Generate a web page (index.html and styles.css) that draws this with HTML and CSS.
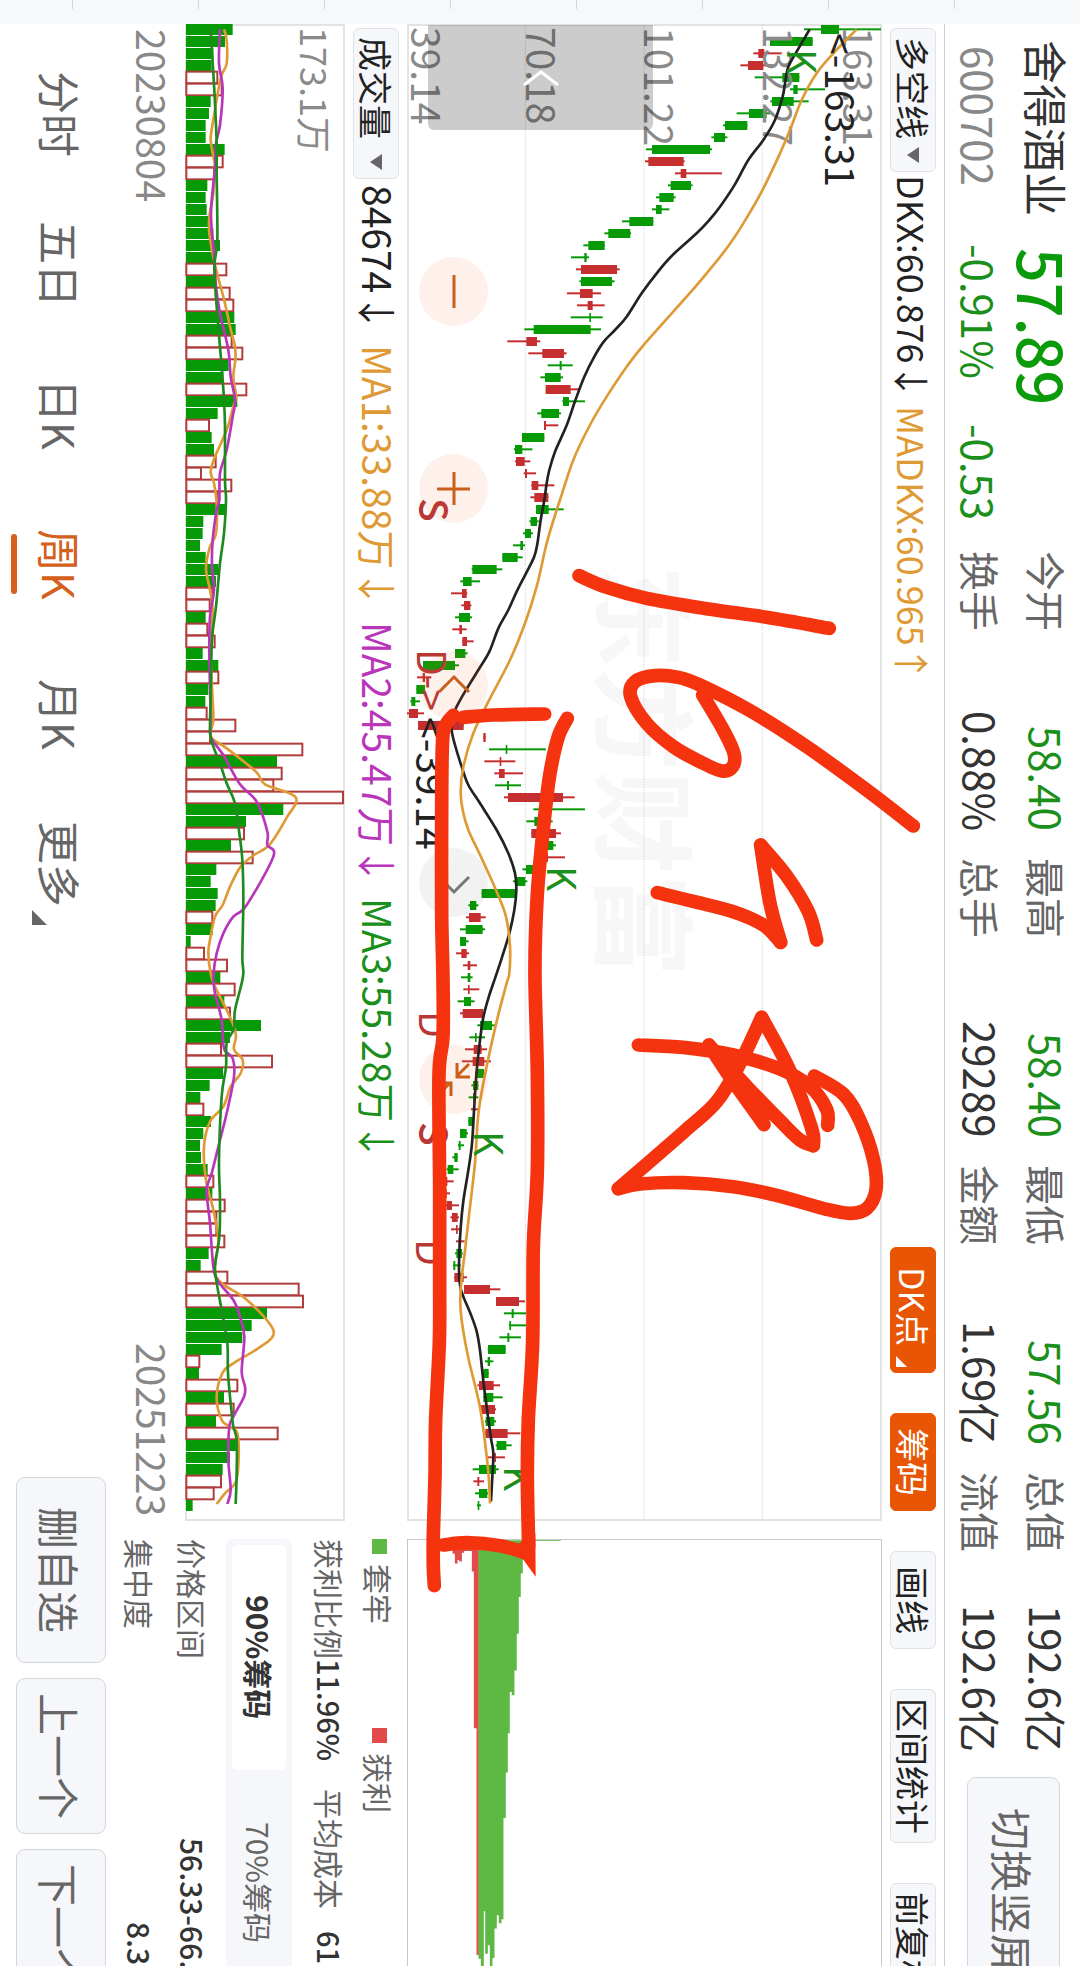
FILE: index.html
```html
<!DOCTYPE html>
<html lang="zh-CN">

<head>
  <meta charset="UTF-8" />
  <meta name="viewport" content="width=device-width, initial-scale=1" />
  <title>舍得酒业 600702</title>
  <link rel="stylesheet" href="styles.css">
</head>

<body>
  <div class="ruler"></div>
  <main class="screen">
    <header class="quote">
      <div class="stock">
        <div class="stockRow">
          <h1 class="stockName">舍得酒业</h1>
          <span class="stockPrice">57.89</span>
        </div>
        <div class="stockRow">
          <span class="stockCode">600702</span>
          <span class="stockPercent">-0.91%</span>
          <span class="stockChange">-0.53</span>
        </div>
      </div>
      <dl class="stats">
        <div class="stat"><dt>今开</dt><dd class="down">58.40</dd></div>
        <div class="stat"><dt>最高</dt><dd class="down">58.40</dd></div>
        <div class="stat"><dt>最低</dt><dd class="down">57.56</dd></div>
        <div class="stat"><dt>总值</dt><dd>192.6亿</dd></div>
        <div class="stat"><dt>换手</dt><dd>0.88%</dd></div>
        <div class="stat"><dt>总手</dt><dd>29289</dd></div>
        <div class="stat"><dt>金额</dt><dd>1.69亿</dd></div>
        <div class="stat"><dt>流值</dt><dd>192.6亿</dd></div>
      </dl>
      <button class="rotateButton" type="button">切换竖屏</button>
    </header>

    <div class="toolbar">
      <button class="tool picker" type="button">多空线<span class="caret"></span></button>
      <span class="legend dkx">DKX:60.876↓</span>
      <span class="legend madkx">MADKX:60.965↑</span>
      <div class="tools">
        <button class="tool active corner" type="button">DK点</button>
        <button class="tool active" type="button">筹码</button>
        <button class="tool" type="button">画线</button>
        <button class="tool" type="button">区间统计</button>
        <button class="tool" type="button">前复权</button>
      </div>
    </div>

    <div class="board">
      <div class="charts">
        <div class="priceChart">
          <svg class="plot" viewBox="0 0 475 1497">
            <text class="watermark" transform="translate(197 541) rotate(90)">东方财富</text>
            <g id="grid" transform="scale(.33333) translate(-21 -72)"></g>
            <g id="candles" transform="scale(.33333) translate(-21 -72)"></g>
            <g class="axis">
              <text transform="translate(4 3) rotate(90)">39.14</text>
              <text transform="translate(119 3) rotate(90)">70.18</text>
              <text transform="translate(237 3) rotate(90)">101.22</text>
              <text transform="translate(356 3) rotate(90)">132.27</text>
              <text transform="translate(436 3) rotate(90)">163.31</text>
            </g>
            <g id="priceLines" transform="scale(.33333) translate(-21 -72)"></g>
            <g class="marks">
              <text class="peak" transform="translate(418 9) rotate(90)">&lt;-163.31</text>
              <text class="peak" transform="translate(9 693) rotate(90)">&lt;-39.14</text>
              <text class="buy" transform="translate(380 25) rotate(90)">K</text>
              <text class="buy" transform="translate(140 842) rotate(90)">K</text>
              <text class="buy" transform="translate(67 1107) rotate(90)">K</text>
              <text class="buy" transform="translate(97 1442) rotate(90)">K</text>
              <text class="sell strong" transform="translate(12 474) rotate(90)">S</text>
              <text class="sell strong" transform="translate(12 1098) rotate(90)">S</text>
              <text class="sell" transform="translate(10 625) rotate(90)">D-&gt;</text>
              <text class="sell" transform="translate(12 987) rotate(90)">D</text>
              <text class="sell" transform="translate(9 1215) rotate(90)">D</text>
            </g>
          </svg>
          <button class="drawer" type="button" aria-label="展开">
            <svg width="36" height="16" viewBox="0 0 36 16"><path d="M1 15 18 2 35 15" /></svg>
          </button>
          <div class="zoomBar">
            <button class="zoomButton" type="button" aria-label="缩小">
              <svg viewBox="0 0 69 69"><path d="M35 18V51" /></svg>
            </button>
            <button class="zoomButton" type="button" aria-label="放大">
              <svg viewBox="0 0 69 69"><path d="M35 18V51M18 35H51" /></svg>
            </button>
            <button class="zoomButton" type="button" aria-label="左移">
              <svg viewBox="0 0 69 69"><path d="M20 41 35 26 50 41" /></svg>
            </button>
            <button class="zoomButton off" type="button" aria-label="右移">
              <svg viewBox="0 0 69 69"><path d="M20 29 35 44 50 29" /></svg>
            </button>
            <button class="zoomButton" type="button" aria-label="全屏">
              <svg viewBox="0 0 69 69"><path d="M50 19 38 31M38 18V32H51M19 50 31 38M18 38H32V51" /></svg>
            </button>
          </div>
        </div>

        <div class="toolbar volumeBar">
          <button class="tool picker" type="button">成交量<span class="caret"></span></button>
          <span class="legend">84674↓</span>
          <span class="legend ma1">MA1:33.88万↓</span>
          <span class="legend ma2">MA2:45.47万↓</span>
          <span class="legend ma3">MA3:55.28万↓</span>
        </div>

        <div class="volumeChart">
          <svg class="plot" viewBox="0 0 160 1497">
            <text class="axis volumeMax" transform="translate(115 3) rotate(90)">173.1万</text>
            <g id="volumes" transform="scale(.33333) translate(-555 -72)"></g>
          </svg>
        </div>

        <div class="dates">
          <time>20230804</time>
          <time>20251223</time>
        </div>
      </div>

      <aside class="chips">
        <svg class="chipPlot" viewBox="81 117 1422 1380" preserveAspectRatio="xMinYMin">
          <path class="won" d="M215 118H294V1365H287V683H279V212H273V150H250V155H243V182H235V177H230V188H222V158H215Z" />
          <path class="trapped" d="M293 118H540V120H426V218H420V288H414V399H408V509H401V584H393V574H387V698H381V816H375V953H368V1257H362V1269H354V1245H348V1285H341V1374H335V1420H327V1335H321V1361H313V1233H309V1420H300V1376H293Z" />
        </svg>
        <div class="chipLegend">
          <span class="chipKey trappedKey">套牢</span>
          <span class="chipKey wonKey">获利</span>
        </div>
        <div class="chipSummary">
          <span>获利比例<b>11.96%</b></span>
          <span>平均成本<b class="cost">61.</b></span>
        </div>
        <div class="segments">
          <button class="segment selected" type="button">90%筹码</button>
          <button class="segment" type="button">70%筹码</button>
        </div>
        <dl class="chipDetails">
          <div><dt>价格区间</dt><dd class="range">56.33-66.</dd></div>
          <div><dt>集中度</dt><dd class="focus">8.39</dd></div>
        </dl>
      </aside>
    </div>

    <footer class="bottomBar">
      <nav class="periods">
        <a href="#">分时</a>
        <a href="#">五日</a>
        <a href="#">日K</a>
        <a href="#" class="current">周K</a>
        <a href="#">月K</a>
        <a href="#" class="more">更多</a>
      </nav>
      <div class="actions">
        <button type="button">删自选</button>
        <button type="button">上一个</button>
        <button type="button">下一个</button>
      </div>
    </footer>

    <svg class="pen" viewBox="-1200 72 3240 5826" preserveAspectRatio="xMinYMin">
      <g id="ink"></g>
      <path class="inkTip" d="M406 4600 407 4730 368 4676 340 4640Z" />
      <path class="inkTip" d="M920 3160 1075 3370 1110 3360 1110 3330 1020 3220Z" />
    </svg>
  </main>
  <script src="chart.js"></script>
</body>

</html>
```
FILE: styles.css
```css
* {
  box-sizing: border-box;
}

body {
  margin: 0;
  height: 100vh;
  display: flex;
  flex-direction: column;
  overflow: hidden;
  background: #fff;
  color: #333;
  font-family: "Noto Sans CJK SC", sans-serif;
}

h1, dl, dd {
  margin: 0;
}

button {
  writing-mode: inherit;
  text-orientation: inherit;
  font-family: inherit;
  margin: 0;
  padding: 0;
  border: 0;
  background: none;
  color: inherit;
  white-space: nowrap;
}

.ruler {
  flex: 0 0 24px;
  background: repeating-linear-gradient(to right, transparent 0 72px, #d4d6d9 72px 73px, transparent 73px 126px) 0 0 / 126px 9px repeat-x #f6f8fa;
}

/* landscape screen, turned a quarter clockwise */
.screen {
  writing-mode: vertical-rl;
  text-orientation: sideways;
  position: relative;
  flex: 1;
  min-height: 0;
  display: flex;
  flex-direction: column;
  overflow: hidden;
  white-space: nowrap;
}

/* quote */

.quote {
  display: flex;
  flex: none;
  padding-block: 1px 2px;
  border-block-end: 1px solid #ccc;
}

.stock {
  flex: 0 0 527px;
  padding-block-start: 4px;
  padding-inline-start: 16px;
}

.stockRow {
  display: flex;
  align-items: flex-start;
  block-size: 64px;
  line-height: 64px;
}

.stockName {
  flex: 0 0 208px;
  font-size: 44px;
  font-weight: 400;
  line-height: 56px;
}

.stockPrice {
  color: #0a9a0a;
  font-size: 61px;
  font-weight: 500;
}

.stockCode {
  flex: 0 0 204px;
  padding-inline-start: 6px;
  color: #888;
  font-size: 42px;
}

.stockPercent,
.stockChange {
  color: #1a8f1a;
  font-size: 42px;
}

.stockPercent {
  flex: 0 0 180px;
}

.stats {
  display: grid;
  grid-template-columns: repeat(4, 280px);
  column-gap: 27px;
  line-height: 64px;
}

.stat {
  display: flex;
  justify-content: space-between;
  font-size: 42px;
}

.stat dt {
  color: #666;
  font-size: 40px;
}

.down {
  color: #1a8f1a;
}

.rotateButton {
  flex: 0 0 230px;
  align-self: center;
  block-size: 93px;
  margin-inline-start: 25px;
  border: 1px solid #d3d6da;
  border-radius: 9px;
  background: #f6f7fa;
  color: #666;
  font-size: 42px;
}

/* toolbars */

.toolbar {
  display: flex;
  flex: none;
  align-items: center;
  block-size: 62px;
  padding-inline-start: 4px;
}

.tool {
  flex: none;
  block-size: 46px;
  min-inline-size: 98px;
  padding-inline: 8px;
  border: 1px solid #dfe3e8;
  border-radius: 6px;
  background: #f6f7fa;
  color: #222;
  font-size: 34px;
  line-height: 42px;
}

.picker {
  display: flex;
  align-items: center;
  justify-content: space-between;
  inline-size: 144px;
  margin-inline-end: 3px;
}

.caret {
  border-inline: 8px solid transparent;
  border-block-start: 12px solid #666;
}

.legend {
  flex: none;
  margin-inline-end: 6px;
  color: #222;
  font-size: 36px;
}

.madkx {
  color: #e09a35;
}

.tools {
  display: flex;
  flex: 0 0 719px;
  min-inline-size: 0;
  gap: 40px;
  margin-inline-start: auto;
}

.active {
  border-color: #e85504;
  background: #e85504;
  color: #fff;
}

.corner {
  position: relative;
  inline-size: 126px;
  padding-inline-end: 14px;
}

.corner::after,
.more::after {
  content: "";
  position: absolute;
  inset-inline-end: 5px;
  inset-block-end: 5px;
  border-block-start: 11px solid transparent;
  border-inline-end: 11px solid currentColor;
}

.volumeBar .picker {
  inline-size: 151px;
  margin-inline-end: 6px;
}

.volumeBar .legend {
  margin-inline-end: 13px;
  padding-block-end: 6px;
  font-size: 39px;
}

.volumeBar .ma1 {
  color: #e09a35;
}

.volumeBar .ma2 {
  color: #b935b9;
}

.volumeBar .ma3 {
  color: #1a8f1a;
}

/* charts */

.board {
  display: flex;
  flex: none;
  gap: 18px;
}

.charts {
  flex: 1;
}

.priceChart,
.volumeChart {
  position: relative;
  border: 2px solid #e3e3e3;
}

.priceChart {
  block-size: 475px;
}

.volumeChart {
  block-size: 160px;
}

.plot {
  display: block;
  margin: -2px;
  width: calc(100% + 4px);
  height: calc(100% + 4px);
  overflow: visible;
}

.plot text {
  writing-mode: horizontal-tb;
  font-size: 39px;
}

.plot .watermark {
  fill: #f7f7f7;
  font-size: 103px;
  font-weight: 700;
}

.axis {
  fill: #8a8a8a;
}

.plot .volumeMax {
  font-size: 36px;
}

.peak {
  fill: #222;
}

.buy {
  fill: #1a8f1a;
}

.sell {
  fill: #b73737;
}

.plot .strong {
  font-weight: 500;
}

.gridLine {
  stroke: #d2d2d2;
  stroke-width: 3;
  stroke-dasharray: 3 3;
}

.up-candle {
  fill: #c62f2f;
}

.down-candle {
  fill: #069a06;
}

.up-volume {
  fill: #fff;
  stroke: #b03c3c;
  stroke-width: 6;
}

.curve {
  fill: none;
  stroke-width: 8;
  stroke-linejoin: round;
}

.drawer {
  position: absolute;
  inset-block-end: 19px;
  inset-inline-start: -1px;
  display: flex;
  align-items: center;
  justify-content: center;
  block-size: 225px;
  inline-size: 105px;
  border-start-end-radius: 6px;
  border-end-end-radius: 6px;
  background: rgba(0, 0, 0, 0.2);
}

.drawer path {
  fill: none;
  stroke: #fff;
  stroke-width: 3;
}

.zoomBar {
  position: absolute;
  inset-block-end: 10px;
  inset-inline-start: 231px;
  display: flex;
  gap: 128px;
}

.zoomButton {
  inline-size: 69px;
  block-size: 69px;
  border-radius: 50%;
  background: rgba(240, 90, 20, 0.09);
}

.zoomButton svg {
  display: block;
}

.zoomButton path {
  fill: none;
  stroke: #c8601c;
  stroke-width: 3;
}

.off {
  background: rgba(0, 0, 0, 0.05);
}

.off path {
  stroke: #777;
}

.dates {
  display: flex;
  justify-content: space-between;
  padding-inline: 5px;
  color: #888;
  font-size: 39px;
  line-height: 64px;
}

/* chips */

.chips {
  flex: 0 0 462px;
  margin-inline-end: -35px;
  color: #666;
  font-size: 30px;
}

.chipPlot {
  display: block;
  block-size: 475px;
  inline-size: 462px;
  border: 1px solid #c8c8c8;
}

.won {
  fill: #e34b4b;
}

.trapped {
  fill: #5db943;
}

.chipLegend,
.chipSummary {
  display: flex;
  line-height: 44px;
}

.chipLegend {
  margin-block-start: 6px;
}

.chipKey {
  display: flex;
  align-items: center;
  flex: 0 0 189px;
  gap: 10px;
}

.chipKey::before {
  content: "";
  inline-size: 15px;
  block-size: 15px;
  background: #5db943;
}

.wonKey::before {
  background: #e34b4b;
}

.chipSummary {
  gap: 28px;
  margin-block: 5px 16px;
}

.chips b,
.chips dd {
  color: #333;
  font-weight: 500;
}

.chipSummary b {
  font-size: 29px;
}

.chipSummary .cost {
  margin-inline-start: 22px;
}

.segments {
  display: flex;
  padding: 6px;
  border-radius: 6px;
  background: #f6f7fa;
}

.segment {
  flex: 1;
  block-size: 54px;
  border-radius: 6px;
  color: #666;
  font-size: 30px;
}

.selected {
  background: #fff;
  color: #333;
  font-weight: 700;
}

.chipDetails {
  display: grid;
  row-gap: 15px;
  margin-block-start: 14px;
  line-height: 38px;
}

.chipDetails div {
  display: flex;
  justify-content: space-between;
}

.range {
  inline-size: 163px;
}

.focus {
  inline-size: 79px;
}

/* bottom bar */

.bottomBar {
  display: flex;
  flex: 1;
  align-items: center;
  justify-content: space-between;
}

.periods {
  display: flex;
  padding-inline-start: 15px;
}

.periods a {
  position: relative;
  inline-size: 150px;
  color: #666;
  font-size: 43px;
  line-height: 118px;
  text-align: center;
  text-decoration: none;
}

.periods .current {
  color: #d4601c;
}

.current::after {
  content: "";
  position: absolute;
  inset-block-end: 9px;
  inset-inline: 45px;
  block-size: 6px;
  border-radius: 3px;
  background: #d4601c;
}

.periods .more::after {
  inset-block-end: 30px;
  inset-inline-end: 14px;
  border-width: 15px;
  border-block-end-width: 0;
  border-inline-start-width: 0;
}

.actions {
  display: flex;
  flex: 0 0 489px;
  min-inline-size: 0;
  gap: 15px;
}

.actions button {
  flex: none;
  block-size: 90px;
  inline-size: 156px;
  border: 1px solid #d3d6da;
  border-radius: 9px;
  background: #f6f7fa;
  color: #666;
  font-size: 42px;
}

.actions button:first-child {
  inline-size: 186px;
}

/* pen strokes over the whole screen */

.pen {
  position: absolute;
  inset: 0;
  width: 100%;
  height: 100%;
  pointer-events: none;
}

.pen #ink path {
  fill: none;
  stroke: #f5330f;
  stroke-width: 41;
  stroke-linecap: round;
  stroke-linejoin: round;
}

.inkTip {
  fill: #f5330f;
}
```
FILE: chart.js
```js
const STEP = 36;
const FIRST = 88;

// low, body start, body end, high, r = up / g = down
const candles = `1212 1263 1317 1443 g|1110 1110 1238 1238 g|1060 1075 1093 1145 r|1021 1044 1090 1120 r|1064 1147 1198 1198 g|1170 1180 1193 1275 g|1111 1116 1181 1226 g|1010 1047 1100 1112 g|969 975 1042 1042 g|934 942 975 982 g
738 756 930 936 g|735 745 851 854 r|825 842 859 966 r|804 812 873 878 g|768 778 821 827 g|756 768 785 808 g|666 688 760 760 g|613 625 691 693 g|550 565 614 614 g|513 553 560 567 g
528 543 651 659 r|538 543 636 644 g|501 540 578 603 r|531 563 578 614 r|512 568 573 608 g|373 401 572 603 g|322 379 411 421 r|385 427 492 500 r|443 479 485 518 g|421 435 482 489 g
437 437 512 538 r|487 489 507 555 g|412 424 477 483 g|432 432 438 475 r|366 366 433 433 g|342 345 367 397 g|345 348 374 391 r|371 375 381 408 r|394 395 415 463 r|391 403 445 445 r
408 408 446 491 g|388 392 411 416 g|369 375 393 399 g|339 361 369 375 g|307 307 353 368 g|215 217 290 307 g|181 189 215 240 g|153 186 200 202 r|184 192 211 214 r|165 177 210 216 g
157 178 186 200 r|187 187 201 221 r|165 165 196 203 g|69 69 165 177 g|51 68 75 94 r|49 49 75 75 g|31 34 46 60 g|21 27 54 72 r|54 54 191 191 r|250 250 257 257 r
267 317 322 438 g|253 299 304 346 r|283 297 314 369 r|285 321 327 363 g|312 324 489 524 r|400 420 440 555 g|379 403 440 458 g|394 394 468 483 r|405 440 460 468 g|430 440 444 495 r
367 378 410 410 g|339 350 376 382 g|245 245 347 350 g|205 210 229 235 g|198 207 242 257 r|180 197 248 255 g|180 180 198 206 g|168 184 200 207 r|189 203 211 231 r|183 203 211 218 g
190 204 209 238 r|173 192 213 224 g|180 188 250 250 r|232 240 276 285 g|208 225 230 255 g|195 221 245 261 r|186 218 253 273 r|225 229 252 252 g|214 219 235 235 g|206 219 225 235 g
213 220 225 236 r|205 205 221 221 g|180 180 200 204 g|174 176 182 192 g|157 163 173 173 g|140 143 160 176 g|120 137 142 161 r|120 135 140 150 r|130 140 156 177 r|151 156 173 177 r
153 168 173 182 r|168 176 181 194 r|165 169 186 188 g|159 160 166 182 g|162 163 191 201 r|192 192 270 301 r|288 288 357 375 r|312 335 341 378 g|327 328 333 378 g|298 322 328 363 g
263 264 317 317 g|255 263 270 280 g|248 250 266 266 g|232 237 281 300 r|250 250 280 308 g|243 243 285 288 r|255 257 283 288 g|256 256 323 361 r|287 290 319 335 g|264 283 288 315 r
218 237 288 296 g|220 232 238 252 r|225 237 262 264 g|231 233 238 243 g`.split(/[|\n]/).map(row => row.split(' '));

const volumes = `g698 g675 g640 g635 r655 r668 g632 g627 g617 g617 g674 r671 r645 g622 g617 g620 g630 g640 g660 g645
r682 g645 r692 r703 g703 g707 r698 r730 g686 g670 r742 g712 g653 r630 g635 g642 r650 r606 r697 r655
g675 g610 g608 g600 g617 g655 g648 r640 r632 g617 r625 r647 g608 g655 r658 g625 g616 r623 r709 r633
r910 g831 r848 r823 r1032 g850 g738 r735 g693 r761 g649 g632 g653 g647 r640 g638 g572 r615 r684 g661
r707 g673 r693 g783 g690 r666 r819 g669 g629 g601 r613 g633 g610 g600 g603 g623 r643 g637 r677 r652
r652 r676 g626 g602 r685 r899 r912 g801 g755 g727 g665 r601 g597 r715 g672 r704 g648 r836 g710 g690
g668 r666 r644 g578`.split(/\s+/);

const dkx = '1229,88 1190,155 1165,200 1155,250 1148,290 1125,360 1090,420 1045,480 1003,556 960,620 928,660 890,700 815,768 770,820 725,880 680,950 645,990 612,1024 585,1066 553,1130 525,1204 500,1276 465,1355 448,1410 440,1450 433,1500 422,1560 412,1632 402,1672 378,1720 350,1775 325,1830 295,1885 268,1955 235,2010 195,2075 170,2120 158,2150 155,2190 165,2235 185,2300 205,2355 240,2410 290,2490 325,2560 345,2620 349,2670 343,2730 328,2800 305,2875 285,2935 265,2995 250,3052 240,3121 230,3213 223,3316 216,3431 205,3511 190,3603 182,3684 177,3798 180,3856 190,3890 212,3942 230,3994 240,4051 250,4143 262,4235 273,4315 280,4361 277,4430 273,4504';
const madkx = '1370,88 1300,160 1250,220 1205,300 1172,385 1140,460 1085,575 1030,670 980,745 920,820 860,890 735,1030 680,1100 620,1190 570,1275 520,1380 480,1500 470,1530 440,1630 410,1760 375,1870 330,1980 265,2105 220,2200 190,2300 182,2375 188,2430 205,2490 245,2575 290,2675 318,2750 330,2840 328,2920 320,2949 290,3064 262,3190 242,3293 233,3362 225,3488 208,3638 195,3752 184,3844 181,3913 188,3982 205,4074 238,4212 255,4326 266,4430 270,4510';

const ma1 = '672,88 680,120 680,190 665,225 655,270 645,330 635,390 632,420 640,470 645,500 640,580 628,650 628,700 640,770 655,835 675,910 690,980 705,1040 706,1080 700,1130 708,1190 700,1220 680,1290 645,1370 632,1415 642,1450 650,1510 648,1600 630,1640 618,1705 630,1770 638,1830 632,1950 636,2060 640,2160 632,2210 680,2245 768,2315 795,2353 887,2392 860,2453 808,2535 762,2565 722,2600 690,2660 668,2715 645,2750 630,2820 625,2860 632,2920 645,2960 680,3030 702,3080 708,3110 702,3148 728,3180 722,3220 692,3260 670,3320 630,3365 612,3440 618,3540 640,3630 655,3720 648,3830 735,3895 808,3970 818,4010 770,4048 700,4090 668,4118 650,4190 665,4260 690,4280 712,4300 716,4370 708,4445 675,4480 650,4512';
const ma2 = '660,88 657,190 668,265 660,375 648,430 645,500 633,640 642,760 648,860 660,940 685,1050 692,1130 705,1200 698,1250 680,1350 660,1420 658,1500 650,1530 638,1620 636,1700 642,1770 630,1850 628,1960 632,2150 632,2210 670,2265 720,2353 770,2405 802,2495 802,2535 820,2570 740,2715 700,2750 670,2800 650,2860 640,2930 645,2980 665,3060 672,3145 698,3175 702,3230 680,3340 660,3420 635,3520 620,3570 630,3670 640,3800 655,3845 700,3900 720,3950 733,4010 725,4115 735,4160 732,4190 700,4250 688,4280 685,4380 692,4470 682,4512';
const ma3 = '632,88 640,220 645,310 650,430 650,520 652,720 643,800 650,920 665,1100 672,1200 675,1280 675,1440 678,1500 672,1600 660,1690 648,1820 636,1920 632,2100 632,2210 660,2290 680,2350 705,2410 718,2500 727,2580 730,2700 727,2870 729,2930 705,3030 702,3085 680,3130 678,3200 665,3290 657,3480 660,3600 658,3710 645,3800 652,3860 665,3930 682,4030 684,4120 695,4240 700,4280 710,4320 710,4420 707,4512';

const strokes = [
  '537,1727 620,1762 740,1795 920,1826 1100,1852 1288,1885',
  '1540,2478 1400,2370 1220,2240 1050,2132 900,2055 835,2032 765,2027 705,2045 692,2090 740,2170 820,2240 900,2285 965,2313 998,2300 1002,2260 970,2190 908,2085',
  '772,2678 880,2704 1000,2735 1090,2775 1142,2827',
  '1142,2827 1110,2710 1082,2535',
  '1082,2535 1160,2628 1225,2735 1250,2820',
  '715,3135 850,3142 1000,3165 1140,3207 1230,3259 1280,3328 1283,3376',
  '927,3135 985,3224 1092,3374',
  '927,3135 1040,3259 1140,3362 1200,3420 1240,3437',
  '1240,3437 1235,3385 1170,3213 1085,3052',
  '1085,3052 1020,3190 950,3305 850,3397 655,3566',
  '655,3566 720,3552 850,3548 1000,3560 1130,3586 1280,3628 1350,3640 1400,3626 1428,3569 1420,3477 1380,3362 1330,3282 1243,3228',
  '434,2142 280,2145 190,2152',
  '160,2146 135,2180 127,2240 125,2440 125,2740 129,2940 129,3110 117,3224 119,3569 119,3856 118,4028 107,4258 105,4430 100,4602 100,4700 103,4757',
  '502,2155 475,2210 450,2320 435,2440 415,2640 407,2790 405,2940 412,3224 412,3511 400,3741 398,4028 385,4258 382,4430 386,4640',
  '130,4635 200,4628 300,4637 380,4660',
];

function add(parent, name, attrs) {
  const el = document.createElementNS('http://www.w3.org/2000/svg', name);
  for (const key in attrs) el.setAttribute(key, attrs[key]);
  parent.appendChild(el);
  return el;
}

// Catmull-Rom through the points
function smooth(text) {
  const p = text.split(' ').map(pair => pair.split(',').map(Number));
  let d = 'M' + p[0];
  for (let i = 0; i < p.length - 1; i++) {
    const a = p[i - 1] || p[i], b = p[i], c = p[i + 1], e = p[i + 2] || c;
    d += `C${b[0] + (c[0] - a[0]) / 6},${b[1] + (c[1] - a[1]) / 6} ${c[0] - (e[0] - b[0]) / 6},${c[1] - (e[1] - b[1]) / 6} ${c}`;
  }
  return d;
}

const grid = document.getElementById('grid');
for (const x of [376, 732, 1087]) {
  add(grid, 'line', { x1: x, x2: x, y1: 72, y2: 4560, class: 'gridLine' });
}

const candleGroup = document.getElementById('candles');
candles.forEach(([low, from, to, high, color], i) => {
  const y = FIRST + STEP * i;
  const cls = color === 'r' ? 'up-candle' : 'down-candle';
  add(candleGroup, 'rect', { x: low, y: y - 3, width: high - low, height: 6, class: cls });
  add(candleGroup, 'rect', { x: from, y: y - 13, width: to - from, height: 27, class: cls });
});

const priceLines = document.getElementById('priceLines');
add(priceLines, 'path', { d: smooth(dkx), class: 'curve', stroke: '#222' });
add(priceLines, 'path', { d: smooth(madkx), class: 'curve', stroke: '#dd9a35' });

const volumeGroup = document.getElementById('volumes');
volumes.forEach((item, i) => {
  const y = FIRST + STEP * i;
  const end = Number(item.slice(1));
  if (item[0] === 'r') {
    add(volumeGroup, 'rect', { x: 559, y: y - 17, width: end - 562, height: 35, class: 'up-volume' });
  } else {
    add(volumeGroup, 'rect', { x: 558, y: y - 16, width: end - 558, height: 33, class: 'down-candle' });
  }
});
add(volumeGroup, 'path', { d: smooth(ma1), class: 'curve', stroke: '#e09a35' });
add(volumeGroup, 'path', { d: smooth(ma2), class: 'curve', stroke: '#b935b9' });
add(volumeGroup, 'path', { d: smooth(ma3), class: 'curve', stroke: '#1f8a1f' });

const ink = document.getElementById('ink');
for (const stroke of strokes) add(ink, 'path', { d: smooth(stroke) });
```
